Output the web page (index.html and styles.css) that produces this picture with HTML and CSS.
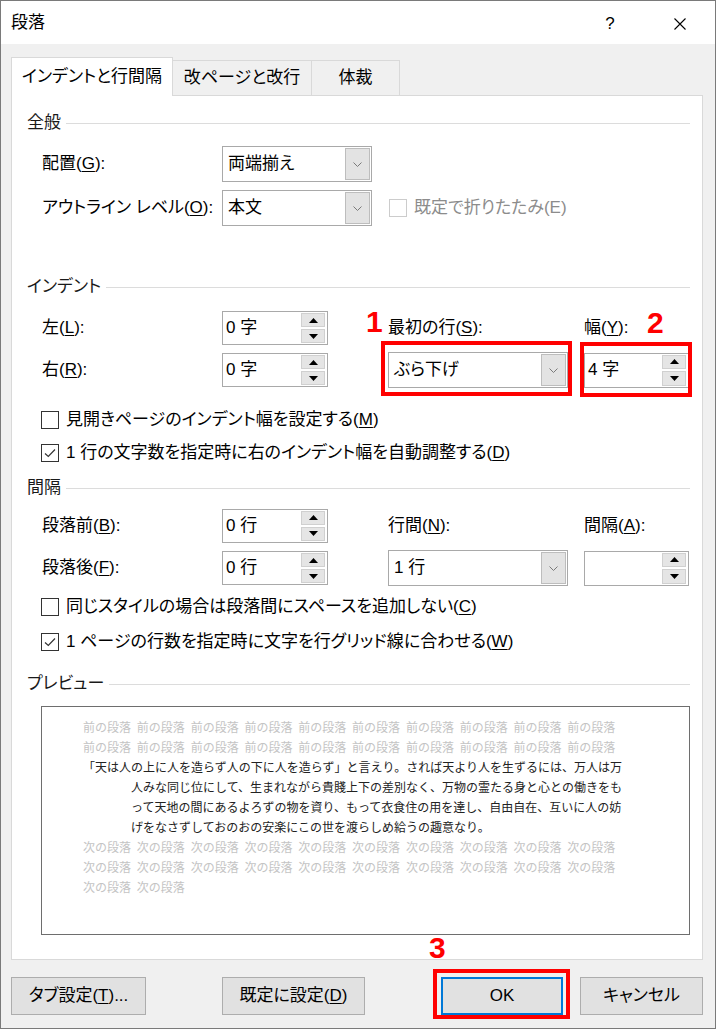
FILE: index.html
```html
<!DOCTYPE html>
<html lang="ja">
<head>
    <meta charset="UTF-8">
    <title>段落</title>
    <link rel="stylesheet" href="styles.css">
</head>
<body>
<div class="dialog">
    <div class="titlebar">
        <div class="title">段落</div>
        <div class="tb-help">?</div>
        <div class="tb-close">
            <svg width="12" height="12" viewBox="0 0 12 12"><path d="M0.5 0.5 L11.5 11.5 M11.5 0.5 L0.5 11.5" stroke="#000" stroke-width="1.1" fill="none"/></svg>
        </div>
    </div>

    <div class="tabs">
        <div class="tab active">インデントと行間隔</div>
        <div class="tab t2">改ページと改行</div>
        <div class="tab t3">体裁</div>
    </div>

    <div class="panel">
        <!-- 全般 -->
        <div class="group-title first"><span>全般</span><i></i></div>
        <div class="grid general">
            <div class="lbl">配置(<u>G</u>):</div>
            <div class="combo w150"><span class="val">両端揃え</span><span class="drop"><svg width="9" height="5" viewBox="0 0 9 5"><path d="M0.5 0.5 L4.5 4.5 L8.5 0.5" stroke="#7a7a7a" fill="none"/></svg></span></div>
            <div></div>
            <div class="lbl">アウトライン レベル(<u>O</u>):</div>
            <div class="combo w150"><span class="val">本文</span><span class="drop"><svg width="9" height="5" viewBox="0 0 9 5"><path d="M0.5 0.5 L4.5 4.5 L8.5 0.5" stroke="#7a7a7a" fill="none"/></svg></span></div>
            <div class="check disabled"><span class="box"></span>既定で折りたたみ(E)</div>
        </div>

        <!-- インデント -->
        <div class="group-title g-indent"><span>インデント</span><i></i></div>
        <div class="grid fourcol indent">
            <div class="lbl">左(<u>L</u>):</div>
            <div class="spin w106"><span class="val">0 字</span><span class="btns"><span><svg width="9" height="5"><path d="M0 5 L4.5 0 L9 5Z"/></svg></span><span><svg width="9" height="5"><path d="M0 0 L4.5 5 L9 0Z"/></svg></span></span></div>
            <div class="lbl">最初の行(<u>S</u>):</div>
            <div class="lbl">幅(<u>Y</u>):</div>

            <div class="lbl">右(<u>R</u>):</div>
            <div class="spin w106"><span class="val">0 字</span><span class="btns"><span><svg width="9" height="5"><path d="M0 5 L4.5 0 L9 5Z"/></svg></span><span><svg width="9" height="5"><path d="M0 0 L4.5 5 L9 0Z"/></svg></span></span></div>
            <div class="combo w180 marked"><span class="val">ぶら下げ</span><span class="drop"><svg width="9" height="5" viewBox="0 0 9 5"><path d="M0.5 0.5 L4.5 4.5 L8.5 0.5" stroke="#7a7a7a" fill="none"/></svg></span>
                <span class="hl hl-1"></span><span class="num n1">1</span>
            </div>
            <div class="spin w105 marked"><span class="val">4 字</span><span class="btns"><span><svg width="9" height="5"><path d="M0 5 L4.5 0 L9 5Z"/></svg></span><span><svg width="9" height="5"><path d="M0 0 L4.5 5 L9 0Z"/></svg></span></span>
                <span class="hl hl-2"></span><span class="num n2">2</span>
            </div>
        </div>

        <div class="check row c1"><span class="box"></span>見開きページのインデント幅を設定する(<u>M</u>)</div>
        <div class="check row c2"><span class="box on"><svg width="16" height="16" viewBox="0 0 16 16"><path d="M3 8.5 L6.3 11.5 L13 4.5" stroke="#333" stroke-width="1.2" fill="none"/></svg></span>1 行の文字数を指定時に右のインデント幅を自動調整する(<u>D</u>)</div>

        <!-- 間隔 -->
        <div class="group-title g-spacing"><span>間隔</span><i></i></div>
        <div class="grid fourcol spacing">
            <div class="lbl">段落前(<u>B</u>):</div>
            <div class="spin w106"><span class="val">0 行</span><span class="btns"><span><svg width="9" height="5"><path d="M0 5 L4.5 0 L9 5Z"/></svg></span><span><svg width="9" height="5"><path d="M0 0 L4.5 5 L9 0Z"/></svg></span></span></div>
            <div class="lbl">行間(<u>N</u>):</div>
            <div class="lbl">間隔(<u>A</u>):</div>

            <div class="lbl">段落後(<u>F</u>):</div>
            <div class="spin w106"><span class="val">0 行</span><span class="btns"><span><svg width="9" height="5"><path d="M0 5 L4.5 0 L9 5Z"/></svg></span><span><svg width="9" height="5"><path d="M0 0 L4.5 5 L9 0Z"/></svg></span></span></div>
            <div class="combo w180"><span class="val">1 行</span><span class="drop"><svg width="9" height="5" viewBox="0 0 9 5"><path d="M0.5 0.5 L4.5 4.5 L8.5 0.5" stroke="#7a7a7a" fill="none"/></svg></span></div>
            <div class="spin w105"><span class="val"></span><span class="btns"><span><svg width="9" height="5"><path d="M0 5 L4.5 0 L9 5Z"/></svg></span><span><svg width="9" height="5"><path d="M0 0 L4.5 5 L9 0Z"/></svg></span></span></div>
        </div>

        <div class="check row c3"><span class="box"></span>同じスタイルの場合は段落間にスペースを追加しない(<u>C</u>)</div>
        <div class="check row c4"><span class="box on"><svg width="16" height="16" viewBox="0 0 16 16"><path d="M3 8.5 L6.3 11.5 L13 4.5" stroke="#333" stroke-width="1.2" fill="none"/></svg></span>1 ページの行数を指定時に文字を行グリッド線に合わせる(<u>W</u>)</div>

        <!-- プレビュー -->
        <div class="group-title g-preview"><span>プレビュー</span><i></i></div>
        <div class="preview">
            <div class="pv-ghost"><span>前の段落</span><span>前の段落</span><span>前の段落</span><span>前の段落</span><span>前の段落</span><span>前の段落</span><span>前の段落</span><span>前の段落</span><span>前の段落</span><span>前の段落</span></div>
            <div class="pv-ghost"><span>前の段落</span><span>前の段落</span><span>前の段落</span><span>前の段落</span><span>前の段落</span><span>前の段落</span><span>前の段落</span><span>前の段落</span><span>前の段落</span><span>前の段落</span></div>
            <div class="pv-line">「天は人の上に人を造らず人の下に人を造らず」と言えり。されば天より人を生ずるには、万人は万</div>
            <div class="pv-line hang">人みな同じ位にして、生まれながら貴賤上下の差別なく、万物の霊たる身と心との働きをも</div>
            <div class="pv-line hang">って天地の間にあるよろずの物を資り、もって衣食住の用を達し、自由自在、互いに人の妨</div>
            <div class="pv-line hang">げをなさずしておのおの安楽にこの世を渡らしめ給うの趣意なり。</div>
            <div class="pv-ghost"><span>次の段落</span><span>次の段落</span><span>次の段落</span><span>次の段落</span><span>次の段落</span><span>次の段落</span><span>次の段落</span><span>次の段落</span><span>次の段落</span><span>次の段落</span></div>
            <div class="pv-ghost"><span>次の段落</span><span>次の段落</span><span>次の段落</span><span>次の段落</span><span>次の段落</span><span>次の段落</span><span>次の段落</span><span>次の段落</span><span>次の段落</span><span>次の段落</span></div>
            <div class="pv-ghost"><span>次の段落</span><span>次の段落</span></div>
        </div>
    </div>

    <div class="buttons">
        <div class="btn b-tab">タブ設定(<u>T</u>)...</div>
        <div class="btn b-default">既定に設定(<u>D</u>)</div>
        <div class="btn b-ok">OK
            <span class="hl hl-3"></span><span class="num n3">3</span>
        </div>
        <div class="btn b-cancel">キャンセル</div>
    </div>
</div>
</body>
</html>
```

FILE: styles.css
```css
* {
    margin: 0;
    padding: 0;
    box-sizing: border-box;
}

body {
    font-family: "Liberation Sans", "Noto Sans CJK JP", sans-serif;
    font-size: 17px;
    font-feature-settings: "palt";
    color: #000;
    background: #f0f0f0;
}

u {
    text-decoration: underline;
    text-underline-offset: 2px;
    text-decoration-thickness: 1px;
}

.dialog {
    width: 716px;
    height: 1029px;
    border: 1px solid #7a7a7a;
    background: #f0f0f0;
    overflow: hidden;
}

/* title bar */
.titlebar {
    height: 43px;
    background: #fff;
    display: flex;
    align-items: center;
    padding-left: 10px;
}

.titlebar .title {
    flex: 1;
    line-height: 20px;
}

.tb-help {
    width: 20px;
    text-align: center;
    font-size: 17px;
    line-height: 20px;
    margin-top: 2px;
}

.tb-close {
    width: 20px;
    height: 12px;
    margin: 2px 25px 0 50px;
    display: flex;
    justify-content: center;
}

/* tabs */
.tabs {
    height: 51px;
    display: flex;
    align-items: flex-end;
    padding-left: 10px;
}

.tab {
    height: 35px;
    line-height: 34px;
    text-align: center;
    border-top: 1px solid #d9d9d9;
    border-right: 1px solid #d9d9d9;
    background: #f0f0f0;
}

.tab.active {
    width: 162px;
    height: 39px;
    line-height: 38px;
    margin-bottom: -1px;
    border-left: 1px solid #d9d9d9;
    background: #fff;
    position: relative;
    z-index: 2;
}

.tab.t2 { width: 139px; }
.tab.t3 { width: 88px; }

/* tab page */
.panel {
    margin-left: 10px;
    width: 692px;
    background: #fff;
    border: 1px solid #d9d9d9;
    padding: 17px 12px 24px 15px;
}

.group-title {
    display: flex;
    align-items: center;
    height: 20px;
    line-height: 20px;
    color: #1a1a1a;
}

.group-title i {
    flex: 1;
    height: 1px;
    background: #dcdcdc;
    margin-left: 5px;
}

.g-indent { margin-top: 51px; }
.g-spacing { margin-top: 14px; }
.g-preview { margin-top: 21px; }

.grid {
    display: grid;
    margin-left: 15px;
    align-items: center;
}

.general {
    margin-top: 13px;
    grid-template-columns: 180px 167px 1fr;
    grid-template-rows: 36px 36px;
    row-gap: 8px;
}

.fourcol {
    grid-template-columns: 180px 166px 196px 105px;
}

.indent {
    margin-top: 14px;
    grid-template-rows: 34px 36px;
    row-gap: 7px;
}

.spacing {
    margin-top: 10px;
    grid-template-rows: 35px 36px;
    row-gap: 7px;
}

.lbl {
    line-height: 20px;
    white-space: nowrap;
}

/* combo box */
.combo {
    display: flex;
    height: 36px;
    border: 1px solid #a9a9a9;
    background: #fff;
    padding: 1px;
}

.w150 { width: 150px; }
.w180 { width: 180px; }

.combo .val {
    flex: 1;
    padding-left: 4px;
    line-height: 32px;
}

.combo .drop {
    width: 25px;
    background: #e3e3e3;
    border: 1px solid #bdbdbd;
    display: flex;
    align-items: center;
    justify-content: center;
}

/* spinner */
.spin {
    display: flex;
    height: 34px;
    border: 1px solid #a9a9a9;
    background: #fff;
    padding: 1px 2px 1px 0;
}

.w106 { width: 106px; }
.w105 { width: 105px; height: 35px; }

.spin .val {
    flex: 1;
    padding-left: 3px;
    line-height: 30px;
}

.spin .btns {
    width: 24px;
    display: flex;
    flex-direction: column;
    gap: 2px;
}

.spin .btns span {
    flex: 1;
    background: #e5e5e5;
    border: 1px solid #d0d0d0;
    display: flex;
    align-items: center;
    justify-content: center;
}

.spin .btns svg { fill: #000; }

/* check boxes */
.check {
    display: flex;
    align-items: center;
    height: 22px;
    line-height: 20px;
    white-space: nowrap;
}

.check .box {
    width: 18px;
    height: 18px;
    border: 1px solid #333;
    background: #fff;
    margin-right: 7px;
    display: flex;
    align-items: center;
    justify-content: center;
}

.check.disabled {
    color: #8c8c8c;
}

.check.disabled .box {
    border-color: #cccccc;
}

.check.row { margin-left: 14px; }
.c1 { margin-top: 21px; }
.c2 { margin-top: 11px; }
.c3 { margin-top: 10px; }
.c4 { margin-top: 13px; }

/* preview */
.preview {
    margin: 12px 0 0 14px;
    height: 229px;
    border: 1px solid #6e6e6e;
    background: #fff;
    padding: 10px 0 0 41px;
    font-family: "Noto Sans CJK JP", sans-serif;
    font-feature-settings: normal;
    font-size: 12px;
    line-height: 20px;
}

.pv-ghost {
    display: flex;
    gap: 5.8px;
    height: 20px;
    color: #c4c4c4;
    white-space: nowrap;
}

.pv-line {
    height: 20px;
    color: #222;
    white-space: nowrap;
}

.pv-line.hang { padding-left: 48px; }

/* bottom buttons */
.buttons {
    display: flex;
    margin-top: 17px;
    padding-left: 10px;
}

.btn {
    height: 38px;
    line-height: 36px;
    text-align: center;
    background: #e1e1e1;
    border: 1px solid #adadad;
    white-space: nowrap;
}

.b-tab { width: 135px; }
.b-default { width: 143px; margin-left: 76px; }
.b-ok {
    width: 122px;
    margin-left: 76px;
    border: 2px solid #0078d7;
    line-height: 34px;
    position: relative;
}
.b-cancel { width: 123px; margin-left: 17px; }

/* red annotations */
.marked { position: relative; }

.hl {
    position: absolute;
    border: 4px solid #ff0000;
}

.hl-1 { left: -8px; right: -5px; top: -12px; bottom: -9px; }
.hl-2 { left: -5px; right: -4px; top: -12px; bottom: -10px; }
.hl-3 { left: -10px; right: -9px; top: -10px; bottom: -6px; }

.num {
    position: absolute;
    font-family: "Liberation Sans", sans-serif;
    font-weight: bold;
    font-size: 30px;
    line-height: 30px;
    color: #ff0000;
}

.n1 { left: -23px; top: -46px; }
.n2 { left: 62px; top: -46px; }
.n3 { left: -14px; top: -46px; }
```
